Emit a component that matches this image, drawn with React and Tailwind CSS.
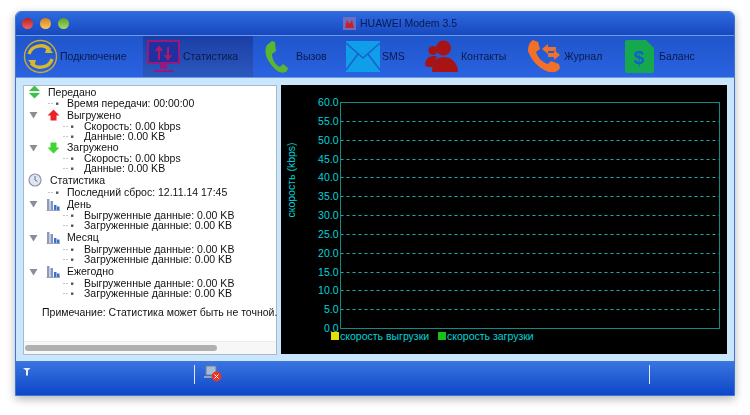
import React from "react";

const Tri = () => (
  <svg width="9" height="8" viewBox="0 0 9 8" className="shrink-0"><path d="M0.5 1h8L4.5 7.5z" fill="#8a8f94" /></svg>
);
const Leaf = () => (
  <svg width="11" height="5" viewBox="0 0 11 5" className="shrink-0"><path d="M0 2.5h6" stroke="#c4c8cc" strokeWidth="1" strokeDasharray="2 1" /><rect x="8" y="1.5" width="2.4" height="2.4" fill="#555" /></svg>
);
const UpArrow = () => (
  <svg width="13" height="12" viewBox="0 0 13 12"><path d="M6.5 0.5 12.5 6.5H9.5V11.5H3.5V6.5H0.5z" fill="#ea2328" /></svg>
);
const DownArrow = () => (
  <svg width="13" height="12" viewBox="0 0 13 12"><path d="M6.5 11.5 12.5 5.5H9.5V0.5H3.5V5.5H0.5z" fill="#3fd631" /></svg>
);
const Both = () => (
  <svg width="13" height="14" viewBox="0 0 13 14"><path d="M6.5 0.5 12 6H1z" fill="#3fbf4f" /><path d="M6.5 13.5 12 8H1z" fill="#3fbf4f" /><path d="M1 7h11" stroke="#cfe8d2" strokeWidth="1" /></svg>
);
const Clock = () => (
  <svg width="14" height="14" viewBox="0 0 14 14"><circle cx="7" cy="7" r="6" fill="#dfe6f0" stroke="#8a97ab" strokeWidth="1.2" /><path d="M7 3v4l2.5 1.5" stroke="#66738a" fill="none" strokeWidth="1" /></svg>
);
const Bars = () => (
  <svg width="14" height="13" viewBox="0 0 14 13"><rect x="1" y="1" width="2.5" height="11" fill="#8c9bb8" /><rect x="4.5" y="3" width="2.5" height="9" fill="#7d95c4" /><rect x="8" y="7" width="2.5" height="5" fill="#3d6fc8" /><rect x="11" y="8.5" width="2.5" height="3.5" fill="#3d6fc8" /><path d="M0.5 12.5h13.5" stroke="#9aa5b5" /></svg>
);

const L1 = ({ children, short }) => (
  <div className={`flex items-center pl-[24px] ${short ? "h-[11px]" : "h-[12px]"}`}><Leaf /><span className="ml-[8px] whitespace-nowrap">{children}</span></div>
);
const L2 = ({ children }) => (
  <div className="flex items-center h-[10.5px] pl-[39px]"><Leaf /><span className="ml-[10px] whitespace-nowrap">{children}</span></div>
);
const Group = ({ icon, children, tall, short }) => (
  <div className={`flex items-center pl-[5px] ${tall ? "h-[13px]" : short ? "h-[11px]" : "h-[12px]"}`}>
    <span className="w-[17px] flex"><Tri /></span>
    <span className="w-[14px] flex justify-center">{icon}</span>
    <span className="ml-[7px] whitespace-nowrap">{children}</span>
  </div>
);

const Nav = ({ icon, label, cls, active }) => (
  <div className={`flex items-center h-full ${cls} ${active ? "bg-gradient-to-b from-[#1a3fa8] to-[#2c58bc]" : ""}`}>
    {icon}
    <span className="text-[10.5px] text-[#0a1a4a] whitespace-nowrap">{label}</span>
  </div>
);

const ticks = ["60.0","55.0","50.0","45.0","40.0","35.0","30.0","25.0","20.0","15.0","10.0","5.0","0.0"];

function Chart() {
  const top = 17.5, bottom = 243.5, left = 59.5, right = 438.5;
  const step = (bottom - top) / 12;
  return (
    <svg width="446" height="269" viewBox="0 0 446 269" className="block" style={{ fontFamily: "'Liberation Sans', sans-serif" }}>
      <rect width="446" height="269" fill="#000" />
      {ticks.map((t, i) => {
        const y = Math.floor(top + step * i) + 0.5;
        return (
          <g key={t}>
            <text x="57.5" y={y + 3.5} textAnchor="end" fontSize="10.5" fill="#00d4d8">{t}</text>
            {i > 0 && i < 12 && <line x1={left} x2={right} y1={y} y2={y} stroke="#18b0a8" strokeDasharray="3 3" />}
          </g>
        );
      })}
      <rect x={left} y={top} width={right - left} height={bottom - top} fill="none" stroke="#128a86" />
      <text transform="translate(14,95) rotate(-90)" textAnchor="middle" fontSize="10.5" fill="#00d4d8">скорость (kbps)</text>
      <rect x="50" y="247" width="8" height="8" fill="#e6e000" />
      <text x="59" y="255" fontSize="10.5" fill="#00d4d8">скорость выгрузки</text>
      <rect x="157" y="247" width="8" height="8" fill="#16c016" />
      <text x="166" y="255" fontSize="10.5" fill="#00d4d8">скорость загрузки</text>
    </svg>
  );
}

export default function App() {
  return (
    <div className="w-[750px] h-[415px] bg-white pt-[11px] pl-[15px] overflow-hidden" style={{ fontFamily: "'Liberation Sans', Arial, sans-serif" }}>
      <div className="w-[720px] h-[385px] flex flex-col rounded-t-[6px] border border-[#3f72d8] shadow-[0_3px_10px_rgba(0,0,0,0.3)] overflow-hidden bg-[#c9e6fd] blur-[0.3px]">
        {/* title */}
        <div className="relative h-[24px] shrink-0 bg-gradient-to-b from-[#2f6ae0] to-[#1748c0] border-b border-[#6a9ae8] flex items-center pl-[6px] gap-[7px]">
          <span className="w-[11px] h-[11px] rounded-full bg-gradient-to-b from-[#b81c1c] to-[#f26060]" />
          <span className="w-[11px] h-[11px] rounded-full bg-gradient-to-b from-[#d88018] to-[#f8c860]" />
          <span className="w-[11px] h-[11px] rounded-full bg-gradient-to-b from-[#5ea020] to-[#a8dc68]" />
          <div className="absolute inset-0 flex items-center justify-center gap-[4px] pl-[50px]">
            <svg width="13" height="13" viewBox="0 0 13 13"><rect width="13" height="13" fill="#6a6fc0" /><path d="M2 11 4 3l2.5 4L9 3l2 8z" fill="#c8202c" /></svg>
            <span className="text-[10.5px] text-[#0a1a4a]">HUAWEI Modem 3.5</span>
          </div>
        </div>
        {/* toolbar */}
        <div className="h-[42px] shrink-0 bg-gradient-to-b from-[#1f56cc] to-[#2a62e0] border-b border-[#6a9ae8] flex items-center pl-[7px]">
          <Nav cls="w-[120px]" label="Подключение" icon={
            <svg width="35" height="35" viewBox="0 0 35 35" className="mr-[2px] shrink-0">
              <circle cx="17.5" cy="17.5" r="16" fill="none" stroke="#c9ad2c" strokeWidth="1.4" />
              <path d="M6 15A12 11 0 0 1 27 11" fill="none" stroke="#d8b82c" strokeWidth="3.4" />
              <path d="M24 7 30 14 22 14z" fill="#d8b82c" />
              <path d="M29 20A12 11 0 0 1 8 24" fill="none" stroke="#d8b82c" strokeWidth="3.4" />
              <path d="M11 28 5 21 13 21z" fill="#d8b82c" />
            </svg>
          } />
          <Nav active cls="w-[110px] pl-[4px] gap-[3px]" label="Статистика" icon={
            <svg width="33" height="33" viewBox="0 0 33 33" className="shrink-0">
              <path d="M1 1h31v22H1z" fill="#2030a0" stroke="#98187c" strokeWidth="2" />
              <path d="M12 20V8M9 11l3-4 3 4" stroke="#b0186a" strokeWidth="2" fill="none" />
              <path d="M21 7v12M18 15l3 4 3-4" stroke="#b0186a" strokeWidth="2" fill="none" />
              <path d="M13 24h7v5h-7z" fill="#98187c" /><path d="M7 30h19v2H7z" fill="#98187c" />
            </svg>
          } />
          <Nav cls="w-[93px] pl-[10px] gap-[7px]" label="Вызов" icon={
            <svg width="26" height="34" viewBox="0 0 26 34" className="shrink-0">
              <path d="M9 1 12 2 13 11 9 14C9 19 12 25 17 27L20 24 25 28 24 31C20 34 15 33 10 27 4 20 0 12 4 5z" fill="#5cb52f" />
            </svg>
          } />
          <Nav cls="w-[79px] gap-[2px]" label="SMS" icon={
            <svg width="34" height="31" viewBox="0 0 34 31" className="shrink-0">
              <rect width="34" height="31" fill="#0f9fe8" />
              <path d="M0 2 17 17 34 2M0 29 12 13M34 29 22 13" fill="none" stroke="#1a5fd0" strokeWidth="1.6" />
            </svg>
          } />
          <Nav cls="w-[103px] gap-[3px]" label="Контакты" icon={
            <svg width="33" height="33" viewBox="0 0 33 33" className="shrink-0">
              <circle cx="18.5" cy="8" r="7.5" fill="#a81414" />
              <circle cx="8" cy="10.5" r="4.5" fill="#a81414" />
              <path d="M0 25c0-5 3-9 8-9h4L7 27H2z" fill="#a81414" />
              <path d="M7 32c0-9 3-15 11.5-15S32.500 23 33 32z" fill="#a81414" />
            </svg>
          } />
          <Nav cls="w-[97px] gap-[1px]" label="Журнал" icon={
            <svg width="35" height="33" viewBox="0 0 35 33" className="shrink-0">
              <path d="M5 0 10 2 12 9 8 12C10 18 15 23 20 24L23 21 31 24 32 28C29 33 24 33 18 31 10 27 3 20 0 11 0 5 2 2 5 0z" fill="#f2702a" />
              <path d="M14 9l6-5v3h8v4h-8v3zM32 15l-6-5v3h-6v4h6v3z" fill="#f2702a" />
            </svg>
          } />
          <Nav cls="w-[90px] gap-[5px]" label="Баланс" icon={
            <svg width="29" height="33" viewBox="0 0 29 33" className="shrink-0">
              <path d="M2 0h19l8 8v23a2 2 0 0 1-2 2H2a2 2 0 0 1-2-2V2a2 2 0 0 1 2-2z" fill="#16a84e" />
              <text x="14" y="24" textAnchor="middle" fontSize="19" fontWeight="700" fill="#1060d0" fontFamily="'Liberation Sans', sans-serif">$</text>
            </svg>
          } />
        </div>
        {/* content */}
        <div className="h-[283px] shrink-0 flex pt-[7px] pl-[7px] gap-[4px]">
          <div className="w-[254px] h-[270px] bg-white border border-[#a8bac8] flex flex-col text-[10.5px] leading-[11px] text-[#111]">
            <div className="flex-1">
              <div className="flex items-center h-[12px] pl-[4px]"><Both /><span className="ml-[7px]">Передано</span></div>
              <L1 short>Время передачи: 00:00:00</L1>
              <Group icon={<UpArrow />}>Выгружено</Group>
              <L2>Скорость: 0.00 kbps</L2>
              <L2>Данные: 0.00 KB</L2>
              <Group short icon={<DownArrow />}>Загружено</Group>
              <L2>Скорость: 0.00 kbps</L2>
              <L2>Данные: 0.00 KB</L2>
              <div className="flex items-center h-[12px] pl-[4px]"><Clock /><span className="ml-[8px]">Статистика</span></div>
              <L1>Последний сброс: 12.11.14 17:45</L1>
              <Group icon={<Bars />}>День</Group>
              <L2>Выгруженные данные: 0.00 KB</L2>
              <L2>Загруженные данные: 0.00 KB</L2>
              <Group tall icon={<Bars />}>Месяц</Group>
              <L2>Выгруженные данные: 0.00 KB</L2>
              <L2>Загруженные данные: 0.00 KB</L2>
              <Group tall icon={<Bars />}>Ежегодно</Group>
              <L2>Выгруженные данные: 0.00 KB</L2>
              <L2>Загруженные данные: 0.00 KB</L2>
              <div className="mt-[8px] pl-[18px] whitespace-nowrap">Примечание: Статистика может быть не точной.</div>
            </div>
            <div className="h-[13px] bg-[#f7f7f7] border-t border-[#ececec] pt-[3px] pl-[1px]">
              <div className="w-[192px] h-[6px] rounded-full bg-[#b0b0b0]" />
            </div>
          </div>
          <Chart />
        </div>
        {/* status */}
        <div className="flex-1 bg-gradient-to-b from-[#3a75e0] to-[#0d45c8] relative">
          <svg width="8" height="8" viewBox="0 0 8 8" className="absolute left-[7px] top-[7px]"><path d="M0 0h7.500L5 2.500V7.500H3V2.500z" fill="#e8f0ff" /></svg>
          <div className="absolute left-[178px] top-[4px] h-[19px] w-px bg-[#dfe9fb]" />
          <svg width="18" height="17" viewBox="0 0 18 17" className="absolute left-[188px] top-[4px]">
            <rect x="2" y="1" width="10" height="9" fill="#a8bcd8" stroke="#6a7d9a" />
            <path d="M0 11h13v2H0z" fill="#8fa3c0" />
            <circle cx="12.500" cy="11.500" r="5" fill="#e8352c" />
            <path d="M10.500 9.500l4 4M14.500 9.500l-4 4" stroke="#fff" strokeWidth="1" />
          </svg>
          <div className="absolute left-[633px] top-[4px] h-[19px] w-px bg-[#dfe9fb]" />
        </div>
      </div>
    </div>
  );
}
